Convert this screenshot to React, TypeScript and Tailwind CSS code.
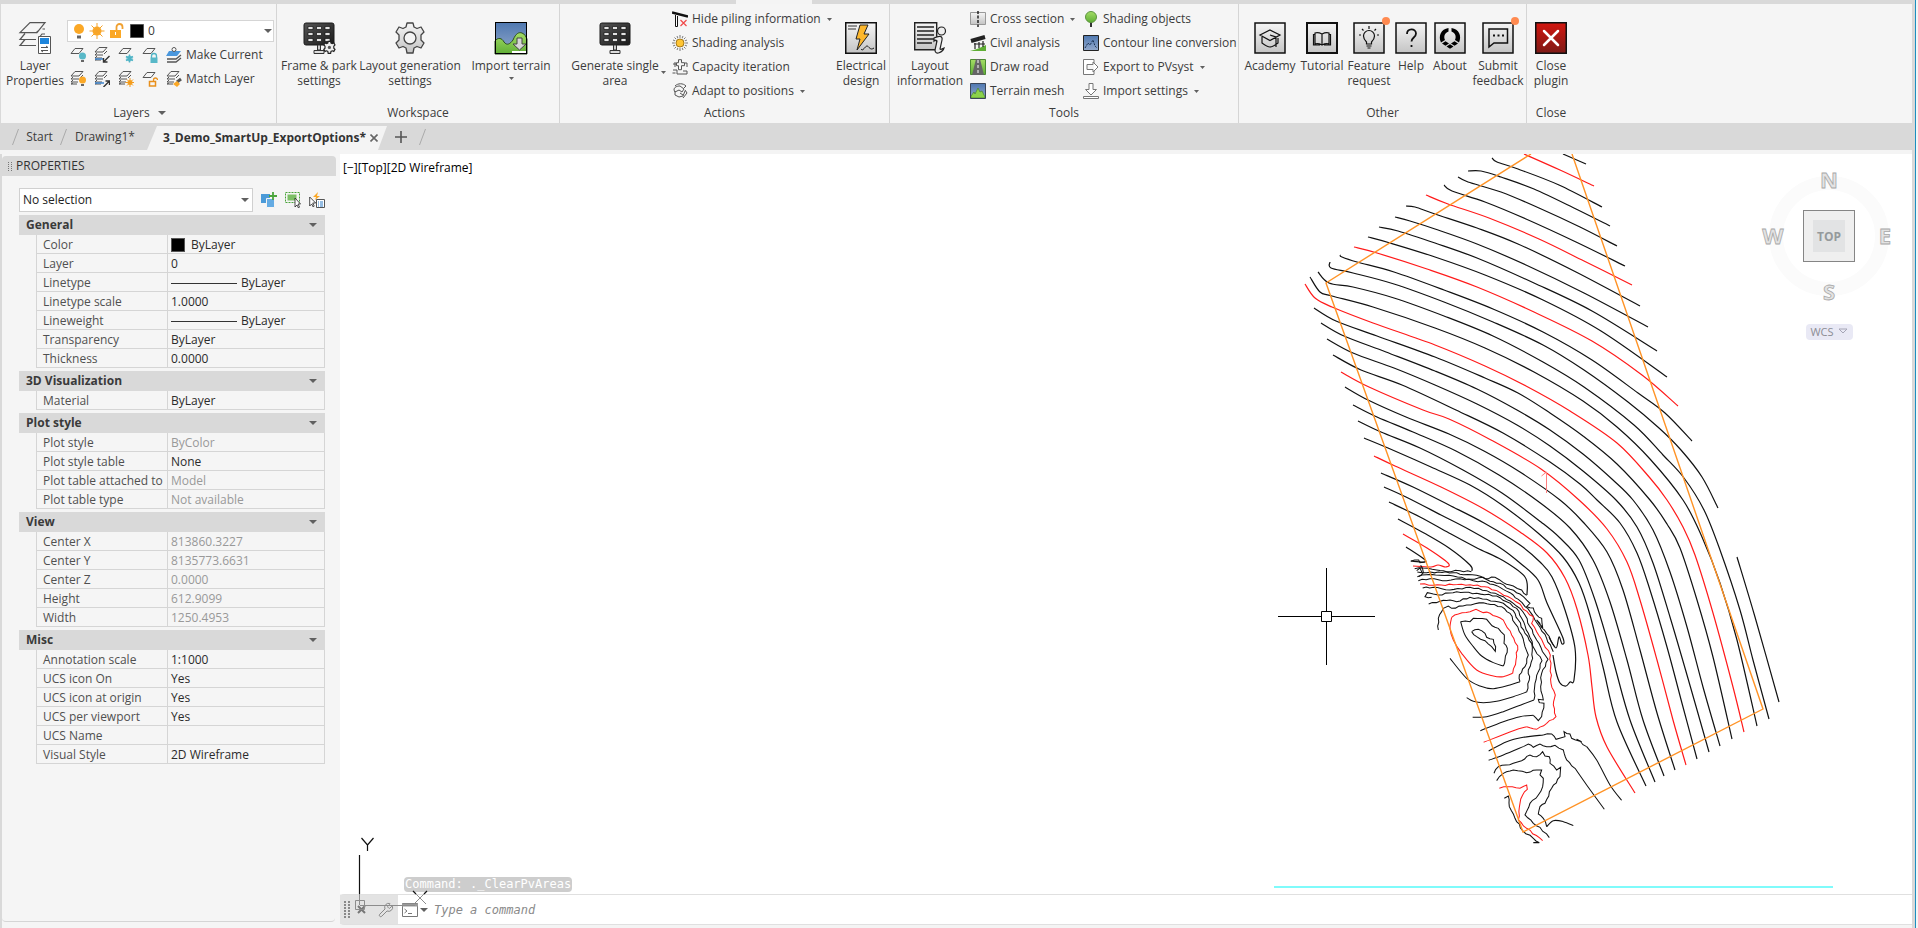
import type { ReactNode } from "react";
import { Wrench } from "lucide-react";

type Point = [number, number];

const RED = "#ff1a1a";
const BLACK = "#111";

function parse(points: string): Point[] {
    return points.split(" ").map((pair) => pair.split(",").map(Number) as Point);
}

// Catmull-Rom spline through the given points
function smooth(points: string) {
    const p = parse(points);
    let d = `M${p[0][0]} ${p[0][1]}`;
    for (let i = 0; i < p.length - 1; i++) {
        const a = p[i - 1] ?? p[i];
        const b = p[i];
        const c = p[i + 1];
        const e = p[i + 2] ?? c;
        d += `C${b[0] + (c[0] - a[0]) / 6} ${b[1] + (c[1] - a[1]) / 6} ${c[0] - (e[0] - b[0]) / 6} ${c[1] - (e[1] - b[1]) / 6} ${c[0]} ${c[1]}`;
    }
    return d;
}

function rough(points: string) {
    const p = parse(points);
    let d = `M${p[0][0]} ${p[0][1]}`;
    for (let i = 1; i < p.length; i++) {
        const [x0, y0] = p[i - 1];
        const [x1, y1] = p[i];
        const len = Math.hypot(x1 - x0, y1 - y0);
        const n = Math.max(1, Math.round(len / 12));
        for (let k = 1; k <= n; k++) {
            const t = k / n;
            const off = k === n ? 0 : Math.sin(i * 7 + k * 4) * 2;
            d += `L${x0 + (x1 - x0) * t - ((y1 - y0) / len) * off} ${y0 + (y1 - y0) * t + ((x1 - x0) / len) * off}`;
        }
    }
    return d;
}

const minorContours = [
    "1563,154 1586,164",
    "1492,158 1497,162 1518,169 1559,185 1602,207",
    "1468,171 1481,171 1501,177 1534,189 1576,209 1610,226",
    "1458,177 1468,182 1501,192 1539,208 1580,227 1617,246",
    "1444,185 1452,191 1485,202 1526,219 1576,242 1625,266",
    "1406,206 1415,207 1435,214 1477,228 1518,244 1576,272 1640,306",
    "1395,217 1410,221 1435,229 1477,244 1526,265 1584,293 1648,327",
    "1379,227 1398,231 1435,243 1477,258 1534,283 1592,311 1657,351",
    "1368,237 1390,243 1435,257 1485,275 1543,300 1601,331 1667,377",
    "1340,255 1342,257 1357,262 1394,272 1444,290 1493,309 1543,332 1592,360 1638,393 1665,413 1692,441",
    "1330,262 1331,268 1353,273 1394,284 1444,302 1493,322 1543,345 1584,370 1628,402 1659,428 1681,450 1702,477 1718,508",
    "1318,272 1329,283 1353,287 1394,298 1444,316 1493,336 1543,362 1584,387 1634,425 1663,455 1684,478 1704,510 1720,550 1740,610 1753,660 1769,719",
    "1310,277 1320,292 1332,296 1373,307 1435,328 1485,348 1534,372 1583,401 1617,427 1650,459 1683,500 1702,537 1720,583 1737,640 1757,726",
    "1314,308 1336,321 1377,336 1435,357 1485,378 1518,393 1550,413 1583,436 1617,464 1650,500 1667,524 1680,548 1697,600 1713,657 1732,739",
    "1321,323 1344,336 1386,352 1435,371 1477,389 1517,410 1550,430 1583,454 1613,480 1633,500 1653,530 1670,572 1687,627 1703,687 1720,746",
    "1327,339 1353,353 1394,368 1435,385 1477,404 1517,425 1550,446 1583,471 1616,500 1637,527 1653,563 1670,617 1687,675 1709,752",
    "1333,355 1361,370 1402,385 1456,410 1503,433 1550,462 1580,484 1597,500 1620,523 1637,553 1650,590 1667,647 1683,707 1697,759",
    "1345,387 1368,400 1406,417 1449,434 1484,451 1520,472 1560,500 1583,522 1607,552 1623,590 1640,650 1657,713 1675,770",
    "1353,405 1377,417 1413,432 1456,451 1499,475 1539,502 1570,528 1593,560 1610,602 1627,660 1643,720 1664,776",
    "1358,421 1381,432 1420,448 1463,470 1502,493 1541,522 1560,538 1579,560 1595,600 1613,660 1630,720 1655,782",
    "1364,438 1388,448 1431,467 1470,485 1502,505 1538,533 1563,557 1579,583 1590,615 1603,667 1617,722 1646,786",
    "1381,473 1413,487 1449,505 1484,523 1520,545 1540,562 1552,577 1565,610 1575,648 1574,680 1570,682 1566,686 1560,683 1556,672 1553,655",
    "1384,487 1406,497 1441,515 1470,530 1499,547 1520,563 1538,580 1547,603 1563,638 1562,644 1559,637 1556,648 1549,637",
    "1389,502 1420,517 1449,533 1477,548 1502,560 1525,577 1527,595",
    "1398,519 1424,533 1449,548 1470,565 1472,571",
    "1406,547 1424,559 1424,562 1411,561",
    "1737,557 1755,617 1779,702",
];

const majorContours = [
    "1524,154 1560,170 1594,186",
    "1426,195 1448,204 1489,218 1539,239 1584,261 1632,285",
    "1354,247 1377,253 1427,269 1477,287 1534,312 1592,341 1642,375 1678,406",
    "1305,284 1315,298 1332,307 1373,323 1435,345 1485,366 1526,386 1570,411 1617,443 1650,478 1667,500 1683,527 1695,555 1713,613 1733,687 1744,732",
    "1341,372 1369,387 1423,410 1449,419 1491,440 1541,469 1579,500 1607,529 1627,562 1640,600 1657,660 1673,720 1686,765",
    "1374,456 1395,466 1441,487 1484,509 1520,532 1547,553 1565,578 1577,609 1588,655 1592,687 1596,717 1607,747 1635,793",
    "1403,534 1427,548 1448,563 1446,567 1438,565 1431,567 1413,566",
];

const roughMinor = [
    "122,64 146,60 150,68 165,66",
    "134,86 160,84 200,90 230,95 270,92 304,95",
    "470,166 455,150 430,138 400,128 375,112 345,116 320,106 280,104 250,98 205,96 170,98 142,96",
    "142,110 170,104 210,106 250,108 275,112 300,118 340,112 360,124 390,130 420,148 450,162 480,190 470,200 490,204 500,225 515,235 518,262 500,240 530,280 555,322",
    "145,122 180,116 230,122 270,116 310,122 350,126 390,142 420,158 445,178 465,200 480,215 495,240 510,262 530,295 550,335",
    "158,144 190,142 240,150 300,142 350,152 400,170 430,190 450,205 465,225 480,260 500,300 525,345 534,358 515,400 512,440 520,480 505,478 508,488 522,490 515,530 505,542 490,526",
    "185,172 165,170 172,158 190,162 205,165 260,155 320,160 380,168 410,185 440,205 455,235 475,280 495,330 516,362 505,395 495,430 492,480",
    "176,192 210,184 240,180 260,185 300,172 350,178 400,190 430,212 445,240 465,280 485,310 488,355 475,390 478,420 470,456",
    "205,270 205,235 220,205 235,198 245,205 290,195 340,188 395,200 420,220 435,250 455,285 465,320 475,345 465,380 448,405 450,425",
    "272,245 300,245 310,235 350,238 360,250 375,262 385,265 403,285 402,310 412,325 405,360 400,378",
    "305,275 325,268 345,280 350,292 370,298 377,320 376,334 365,320 345,302 320,290 305,275",
    "520,585 545,582 558,598 585,590 582,575 600,582 605,595 635,605 620,598 650,620",
    "460,620 475,612 490,622 510,612 530,620 555,616 580,630 590,660 615,685",
    "372,700 385,680 430,670 455,662 480,645 500,650 518,635 525,648 538,650 540,670 560,690 572,682 570,710 545,745 525,790 510,800 505,822 520,835 530,860",
    "380,722 400,700 430,690 470,698 500,690 515,690 510,705 520,715 518,740 505,765 480,790 465,825 490,850 510,862 538,893",
    "403,775 415,768 418,800 435,835 458,872 490,895 508,908 490,908",
    "140,92 150,84 156,98",
    "152,76 160,98 146,110",
];

const smoothMinor = [
    "490,526 450,530 400,545 331,572",
    "492,480 460,492 400,515 350,530 308,532",
    "470,456 430,470 380,484 340,488 310,484 290,473",
    "450,425 420,435 370,446 330,438 290,415 240,355",
    "400,378 370,368 335,348 310,320 285,285 272,245",
    "356,633 410,605 460,592 520,585",
    "650,620 680,660 720,735 755,781",
    "356,661 400,645 460,620",
    "615,685 650,735 703,808",
    "530,860 550,842 580,845 610,857",
];

const roughMajor = [
    "150,132 190,136 250,134 300,134 355,142 390,158 425,176 450,192 460,208 490,230 485,250 500,275 520,310 541,345 543,430 556,465 550,495 558,530 530,550 500,568 470,560",
    "245,232 265,222 300,215 318,208 330,214 360,220 400,240 425,285 443,318 438,360 428,400",
    "388,745 415,740 450,745 470,735 472,748 458,765 450,790 445,840 470,865 518,902",
];

const smoothMajor = ["470,560 430,572 341,607", "428,400 400,410 370,408 320,390 275,340 250,300 240,265 245,232"];

function TerrainDrawing() {
    return (
        <svg className="absolute inset-0 h-full w-full" viewBox="340 154 1572 740" preserveAspectRatio="xMaxYMin meet" fill="none">
            <g stroke={BLACK} strokeWidth="1.2">
                {minorContours.map((line) => <path key={line} d={smooth(line)} />)}
            </g>
            <g stroke={RED} strokeWidth="1.2">
                {majorContours.map((line) => <path key={line} d={smooth(line)} />)}
            </g>
            <g transform="translate(1370 540) scale(0.3333)" strokeWidth="3.1">
                <g stroke={BLACK}>
                    {roughMinor.map((line) => <path key={line} d={rough(line)} />)}
                    {smoothMinor.map((line) => <path key={line} d={smooth(line)} />)}
                </g>
                <g stroke={RED}>
                    {roughMajor.map((line) => <path key={line} d={rough(line)} />)}
                    {smoothMajor.map((line) => <path key={line} d={smooth(line)} />)}
                </g>
            </g>
            <path d="M1531 154L1326 283L1523 832L1763 709L1572 154" stroke="#ff9326" strokeWidth="1.4" />
            <path d="M1546.500 493V472l-5 4" stroke="#ff7f7f" />
            <path d="M1274 887H1833" stroke="#7ffbfb" strokeWidth="2" />
            {/* Crosshair cursor */}
            <path d="M1278 616.500H1321M1332 616.500H1375M1326.500 568V611M1326.500 622V665M1321.500 611.500h10v10h-10z" stroke="#000" />
        </svg>
    );
}

function ViewCube() {
    return (
        <svg className="absolute top-2 right-3 h-[180px] w-36" viewBox="0 0 144 180" aria-label="View cube" fontFamily="'Open Sans', sans-serif" textAnchor="middle">
            <circle cx="73" cy="74" r="53" fill="none" stroke="#fbfbfb" strokeWidth="14" />
            <g fill="#e3e3e3" stroke="#a8a8a8" strokeWidth="0.8" fontSize="22" fontWeight="700">
                <text x="73" y="26">N</text>
                <text x="73" y="138">S</text>
                <text x="17" y="82">W</text>
                <text x="129" y="82">E</text>
            </g>
            <rect x="47.500" y="48.500" width="51" height="51" fill="#efefef" stroke="#858585" />
            <rect x="57" y="58" width="32" height="32" fill="#e2e3e4" />
            <text x="73" y="79" fontSize="12" fontWeight="700" fill="#959a9c">TOP</text>
            <rect x="50" y="162" width="47" height="16" rx="4" fill="#e9e9f5" />
            <text x="66" y="174" fontSize="11" fill="#8c8c94">WCS</text>
            <path d="M83 167h8l-4 4z" fill="none" stroke="#a5a5b5" />
        </svg>
    );
}

function Caret({ small = false }: { small?: boolean }) {
    return (
        <svg className={small ? "h-[3px] w-[5px] shrink-0" : "h-1 w-2 shrink-0"} viewBox="0 0 8 4" preserveAspectRatio="none" aria-hidden="true">
            <path d="M0 0h8L4 4z" fill="#606060" />
        </svg>
    );
}

function Icon16({ children }: { children: ReactNode }) {
    return <svg className="h-4 w-4 shrink-0" viewBox="0 0 16 16" fill="none" aria-hidden="true">{children}</svg>;
}

function Icon32({ children }: { children: ReactNode }) {
    return <svg className="h-8 w-8 shrink-0 overflow-visible" viewBox="0 0 32 32" fill="none" aria-hidden="true">{children}</svg>;
}

function Gradients() {
    return (
        <svg className="absolute h-0 w-0" aria-hidden="true">
            <defs>
                <linearGradient id="metal" x1="0" y1="0" x2="0" y2="1"><stop offset="0" stopColor="#f5f5f5" /><stop offset="1" stopColor="#c4c4c4" /></linearGradient>
                <linearGradient id="sky" x1="0" y1="0" x2="0" y2="1"><stop offset="0" stopColor="#4f78b0" /><stop offset="1" stopColor="#93a9cc" /></linearGradient>
                <linearGradient id="grass" x1="0" y1="0" x2="0" y2="1"><stop offset="0" stopColor="#a4dd66" /><stop offset="1" stopColor="#5fae35" /></linearGradient>
                <linearGradient id="danger" x1="0" y1="0" x2="0" y2="1"><stop offset="0" stopColor="#d3160f" /><stop offset="1" stopColor="#7d1a16" /></linearGradient>
                <linearGradient id="panel" x1="0" y1="0" x2="1" y2="1"><stop offset="0" stopColor="#555" /><stop offset="1" stopColor="#1b1b1b" /></linearGradient>
            </defs>
        </svg>
    );
}

function SolarPanel() {
    return (
        <>
            <rect x="1" y="1" width="30" height="22" rx="2" fill="url(#panel)" stroke="#1a1a1a" />
            <path d="M5 4.500h5v3H5zM13.500 4.500h5v3h-5zM22 4.500h5v3h-5zM5 10.500h5v3H5zM13.500 10.500h5v3h-5zM22 10.500h5v3h-5zM5 16.500h5v3H5zM13.500 16.500h5v3h-5zM22 16.500h5v3h-5z" fill="#e2e2e2" stroke="#111" strokeWidth="0.7" />
            <path d="M14.500 23h3v5h-3z" fill="#ccc" stroke="#333" />
            <path d="M11 28.500h10v3H11z" fill="#ddd" stroke="#333" />
        </>
    );
}

const GEAR = "M13 1h6l1 4 3 1.500 4-1.500 3 5-3 3v5l3 3-3 5-4-1.500L20 26l-1 5h-6l-1-5-3-1.500L5 26l-3-5 3-3v-5l-3-3 3-5 4 1.500L12 5z";

const icons = {
    layerProperties: (
        <Icon32>
            <path d="M11 .700h15l-8 10H1zM6 11.500l-5 6h16M6 17.500l-5 6h16M17 11l2-2M26 7h-2.500M26 12h-3l-2 2.500" stroke="#555" strokeWidth="1.200" />
            <path d="M19.500 14.500h12v17h-12z" fill="#fff" stroke="#555" />
            <path d="M21 16h9v6h-9z" fill="#1f86dc" />
            <path d="M22 25.500h7l-2-1.500M29 28.500h-7l2 1.500" stroke="#555" />
        </Icon32>
    ),
    framePark: (
        <Icon32>
            <SolarPanel />
            <g transform="translate(20 19) scale(0.4)"><path d={GEAR} fill="#eee" stroke="#222" strokeWidth="3" /><circle cx="16" cy="16" r="4" fill="#555" /></g>
        </Icon32>
    ),
    gear: (
        <Icon32>
            <path d={GEAR} fill="url(#metal)" stroke="#444" strokeWidth="1.300" strokeLinejoin="round" />
            <circle cx="16" cy="16" r="6" fill="#f4f4f4" stroke="#444" strokeWidth="1.300" />
        </Icon32>
    ),
    importTerrain: (
        <Icon32>
            <rect x=".5" y=".5" width="31" height="31" fill="url(#sky)" />
            <path d="M0 32V19c3-4 7-3 9 1 3 4 6 2 9-2 3-7 6-8 9-7 3 1 4 4 5 6v15z" fill="url(#grass)" stroke="#2c4f1c" />
            <path d="M22 16h5v6h4l-6.500 6L18 22h4z" fill="#d6d6d6" stroke="#444" />
            <path d="M17 30h15" stroke="#fff" strokeWidth="2" />
            <rect x=".5" y=".5" width="31" height="31" stroke="#000" />
        </Icon32>
    ),
    generate: <Icon32><SolarPanel /></Icon32>,
    electrical: (
        <Icon32>
            <rect x=".75" y=".75" width="30.500" height="30.500" fill="url(#metal)" stroke="#111" strokeWidth="1.500" />
            <path d="M3 4h9M3 7h8" stroke="#333" />
            <path d="M15 3h8l-4 9h5L12 28l3-11h-4z" fill="#fdb72c" stroke="#222" />
            <path d="M16 27c2 3 4-3 6-3s3 5 7 2" stroke="#111" />
        </Icon32>
    ),
    information: (
        <Icon32>
            <path d="M.7.7h22v27H.7z" fill="url(#metal)" stroke="#222" strokeWidth="1.400" />
            <path d="M3 5h17M3 9h17M3 13h17M3 17h17M3 21h15" stroke="#222" strokeWidth="1.500" />
            <circle cx="27.500" cy="9" r="4" fill="#eee" stroke="#222" strokeWidth="1.200" />
            <path d="M20 16c4-2 9-3 8 2l-2 9c1 1 2 0 4-1-1 4-9 8-9 2l2-9c-1-1-2-1-3 0z" fill="#eee" stroke="#222" strokeWidth="1.200" />
        </Icon32>
    ),
    academy: (
        <Framed>
            <path d="M16 8l10 5-10 5.500L6 13zM8 15v6c4 3 6 4 8 4s4-1 8-4v-5M16 13l6 2v8M22 23v2" />
        </Framed>
    ),
    tutorial: (
        <Framed heavy>
            <path d="M9 11c3-1 5 0 7 1 2-1 4-2 7-1v11c-3-1-5 0-7 1-2-1-4-2-7-1zM16 12v11M9 12.500H7.500V23H14M23 12.500h1.500V23H18" />
        </Framed>
    ),
    feature: (
        <Framed dot>
            <path d="M13.500 22v-2c-2-2-3-4-3-6a5.500 5.500 0 0 1 11 0c0 2-1 4-3 6v2zM13.500 24h5M14.500 26h3M16 4v3M9 7l1.500 1.500M23 7l-1.500 1.500M6 13h2M24 13h2" />
        </Framed>
    ),
    help: (
        <Framed>
            <path d="M12 12c0-6 9-6 9-.5 0 4-4.500 4-4.500 8M16.500 23v2" strokeWidth="1.800" />
        </Framed>
    ),
    about: (
        <Framed>
            <g fill="#000" stroke="none">
                <path d="M14.500 6C7 7 4 14 7 20.500l4-2.500c-1.500-3.500-.5-7 3.500-8.500zM17.500 6C25 7 28 14 25 20.500L21 18c1.500-3.500.5-7-3.500-8.500z" />
                <path d="M8 21.500l3.500-2.200 3.500 2.200-3.500 2.200zM17 21.500l3.500-2.200 3.500 2.200-3.500 2.200zM12.500 24.500l3.500-2.200 3.500 2.200-3.500 2.200z" />
            </g>
        </Framed>
    ),
    feedback: (
        <Framed dot>
            <path d="M7 7h18.500v14H12l-5 4z" strokeWidth="1.500" />
            <path d="M11 13.500h2M15.500 13.500h2M20 13.500h2" strokeWidth="2" />
        </Framed>
    ),
    close: (
        <Icon32>
            <rect x=".75" y=".75" width="30.500" height="30.500" fill="url(#danger)" stroke="#111" strokeWidth="1.500" />
            <path d="M9 9l14 14M23 9L9 23" stroke="#fff" strokeWidth="2.500" strokeLinecap="round" />
        </Icon32>
    ),
};

function Framed({ children, heavy = false, dot = false }: { children: ReactNode; heavy?: boolean; dot?: boolean }) {
    return (
        <Icon32>
            <rect x="1" y="1" width="30" height="30" fill="url(#metal)" stroke="#111" strokeWidth={heavy ? 2 : 1.5} />
            <g stroke="#111" strokeWidth="1.200">{children}</g>
            {dot && <circle cx="33" cy="-1" r="4" fill="#ff8a50" />}
        </Icon32>
    );
}

const smallIcons = {
    piling: (
        <Icon16>
            <path d="M0 1.500l16 4" stroke="#111" strokeWidth="2.500" />
            <path d="M3.500 4v11.500h2V5" stroke="#111" fill="#fff" />
            <path d="M8.500 9l6 6M14.500 9l-6 6" stroke="#f04848" strokeWidth="1.200" />
        </Icon16>
    ),
    shading: (
        <Icon16>
            <path d="M8 0v16M0 8h16M2.500 2.500l11 11M13.500 2.500l-11 11M5 1l6 14M11 1L5 15M1 5l14 6M1 11l14-6" stroke="#444" strokeWidth=".7" />
            <circle cx="8" cy="8" r="5.300" fill="#f4f4f4" />
            <circle cx="8" cy="8" r="4" fill="#ffc533" stroke="#a67b1c" />
        </Icon16>
    ),
    capacity: (
        <Icon16>
            <path d="M1 5h4M3 3v5M6.500.7h3v3h3v3h-3v4h-3v-4h-2v-3h2zM1 11h4v4h10v-3h-4M13 4h2v4M.5 14h3" stroke="#555" />
        </Icon16>
    ),
    adapt: (
        <Icon16>
            <path d="M3 3c3-3 8-3 11 0l-2 2M2 7c0-3 3-4 6-4l4 3-2 3-3-2-4 2zM3 8v4l4 2 4-1 2-5M8 10l3 2M13 7l2 3-4 5" stroke="#555" />
        </Icon16>
    ),
    crossSection: (
        <Icon16>
            <path d="M.5 1.500h15v12H.5z" fill="url(#metal)" stroke="#999" />
            <path d="M8 0v16" stroke="#222" strokeWidth="1.500" strokeDasharray="3 1.500" />
        </Icon16>
    ),
    civil: (
        <Icon16>
            <path d="M0 16c5-1 10-3 16-6v6z" fill="#5fae35" />
            <path d="M1 6l14-4" stroke="#222" strokeWidth="4" />
            <path d="M5 8v6M9 7v6M13 6v6M4 9h11" stroke="#222" strokeWidth="1.200" />
        </Icon16>
    ),
    road: (
        <Icon16>
            <path d="M.5.500h15v15H.5z" fill="url(#grass)" stroke="#4c8a32" />
            <path d="M6 0h4l4 16H2z" fill="#666" />
            <path d="M8 1v14" stroke="#fff" strokeDasharray="3 2" />
        </Icon16>
    ),
    mesh: (
        <Icon16>
            <path d="M.5.500h15v15H.5z" fill="url(#sky)" />
            <path d="M1 13l3-4 1 2 3-6 2 4 2-1 3 6v1H1z" fill="#8bd24a" stroke="#47822c" strokeWidth=".7" />
            <path d="M.5.500h15v15H.5z" stroke="#3b4658" />
        </Icon16>
    ),
    tree: (
        <Icon16>
            <path d="M8 9v7" stroke="#333" strokeWidth="2" />
            <circle cx="8" cy="6" r="5.500" fill="url(#grass)" stroke="#5d9440" />
        </Icon16>
    ),
    contour: (
        <Icon16>
            <path d="M.5.500h15v15H.5z" fill="url(#sky)" stroke="#222" />
            <path d="M2 13l3-5 2 2 3-5 2 6 2 2" stroke="#1c3354" strokeDasharray="2 1" />
        </Icon16>
    ),
    exportIcon: (
        <Icon16>
            <path d="M11 4V.500H.500v15H11V12M4 5.500h6V3l5 5-5 5v-2.500H4z" fill="#fff" stroke="#777" />
        </Icon16>
    ),
    importIcon: (
        <Icon16>
            <path d="M6 .500h4v6h3.500L8 12 2.500 6.500H6zM.500 13.500h15v2H.500z" fill="#fff" stroke="#777" />
        </Icon16>
    ),
};

type Badge = "bulbBlue" | "bulb" | "in" | "out" | "snow" | "sun" | "lockBlue" | "unlock";

const badges: Record<Badge, ReactNode> = {
    bulbBlue: <><circle cx="12.500" cy="9" r="3.500" fill="#58b8c8" /><path d="M11 14h3" stroke="#666" strokeWidth="2" /></>,
    bulb: <><circle cx="12.500" cy="9" r="3.500" fill="#fba826" /><path d="M11 14h3" stroke="#666" strokeWidth="2" /></>,
    in: <><path d="M1 12h9" stroke="#3f86cf" strokeWidth="1.500" /><path d="M15.500 9l-6 6M9.500 11v4h4" stroke="#333" strokeWidth="1.400" /></>,
    out: <><path d="M1 12h9" stroke="#3f86cf" strokeWidth="1.500" /><path d="M9.500 16l6-6M11.500 10h4v4" stroke="#333" strokeWidth="1.400" /></>,
    snow: <><path d="M11.500 7.500v8M8 9.500l7 4M15 9.500l-7 4" stroke="#4fb4c6" strokeWidth="1.500" /><circle cx="11.500" cy="11.500" r="2.500" stroke="#4fb4c6" /></>,
    sun: <><circle cx="12" cy="11.500" r="2.500" fill="#fba826" /><path d="M12 7v9M7.500 11.500h9M9 8.500l6 6M15 8.500l-6 6" stroke="#f29a1c" /></>,
    lockBlue: <><path d="M9.500 11V9a2.500 2.500 0 0 1 5 0v2" stroke="#4fb4c6" strokeWidth="1.300" /><path d="M8.500 10.500h7V16h-7z" fill="#58b8c8" /></>,
    unlock: <><path d="M11.500 11V9a2 2 0 0 1 4 0" stroke="#e8901c" strokeWidth="1.300" /><path d="M7.500 10.500h6V15h-6z" stroke="#e8901c" strokeWidth="1.500" /></>,
};

function LayerIcon({ badge, stacked = false }: { badge: Badge; stacked?: boolean }) {
    return (
        <Icon16>
            {stacked
                ? <path d="M5 .500h8L9 5H1zM3 6L1 8h8M3 9l-2 2h7M13 4l-3 3M3 12l-2 1h6" stroke="#555" />
                : <path d="M5 1.500h8l-4 5H1z" stroke="#555" />}
            {badges[badge]}
        </Icon16>
    );
}

function BigButton({ icon, label, width, caret }: { icon: ReactNode; label: string; width: string; caret?: "below" | "side" }) {
    return (
        <button type="button" className={`relative flex shrink-0 flex-col items-center pt-[18px] ${width}`}>
            {icon}
            <span className="mt-1 text-center leading-[15px] whitespace-pre-line">{label}</span>
            {caret === "below" && <span className="mt-1"><Caret small /></span>}
            {caret === "side" && <span className="absolute top-[67px] right-0"><Caret small /></span>}
        </button>
    );
}

function SmallButton({ icon, label, caret = false }: { icon: ReactNode; label: string; caret?: boolean }) {
    return (
        <button type="button" className="flex h-6 items-center whitespace-nowrap">
            {icon}
            <span className="ml-1">{label}</span>
            {caret && <span className="ml-[6px]"><Caret small /></span>}
        </button>
    );
}

function RibbonPanel({ title, children, caret = false, last = false }: { title: string; children: ReactNode; caret?: boolean; last?: boolean }) {
    return (
        <section className={last ? "flex flex-col" : "flex flex-col border-r border-[#d5d5d5]"}>
            <div className="flex h-[100px]">{children}</div>
            <h2 className="flex items-center justify-center gap-2 leading-[18px]">
                {title}
                {caret && <Caret />}
            </h2>
        </section>
    );
}

function Ribbon() {
    return (
        <div className="flex h-[119px] border-l border-[#d9d9d9] bg-[#f5f5f5] pl-[2px]">
            <RibbonPanel title="Layers" caret>
                <BigButton icon={icons.layerProperties} label={"Layer\nProperties"} width="w-[64px]" />
                <div className="w-[209px] pt-4 pr-[2px]">
                    <div className="relative flex items-center">
                        <select aria-label="Layer" className="h-[22px] w-full appearance-none border border-[#d5d5d5] bg-white pl-20 text-xs">
                            <option>0</option>
                        </select>
                        <svg className="pointer-events-none absolute left-[6px] h-4 w-[72px]" viewBox="0 0 72 16" fill="none" aria-hidden="true">
                            <circle cx="6" cy="6" r="5" fill="#fba826" />
                            <path d="M4 14h4" stroke="#666" strokeWidth="3" />
                            <circle cx="24" cy="8" r="4.500" fill="#fba826" />
                            <path d="M24 0v16M16.500 8h15M18.500 2.500l11 11M29.500 2.500l-11 11" stroke="#f5a32a" />
                            <path d="M43.500 7V4a3 3 0 0 1 6 0v2" stroke="#f0a030" strokeWidth="1.800" />
                            <path d="M37 7h11v8H37z" fill="#fba826" />
                            <path d="M42.500 9v3" stroke="#fff" />
                            <path d="M57.500 1.500h13v13h-13z" fill="#000" stroke="#555" />
                        </svg>
                        <span className="pointer-events-none absolute right-[2px]"><Caret /></span>
                    </div>
                    <div className="flex h-6 items-center gap-2 pt-[2px] pl-[3px]">
                        <button type="button" aria-label="Layer off"><LayerIcon badge="bulbBlue" /></button>
                        <button type="button" aria-label="Isolate"><LayerIcon badge="in" stacked /></button>
                        <button type="button" aria-label="Freeze"><LayerIcon badge="snow" /></button>
                        <button type="button" aria-label="Lock"><LayerIcon badge="lockBlue" /></button>
                        <button type="button" className="flex items-center gap-1 whitespace-nowrap">
                            <Icon16>
                                <path d="M3 4h12l-4 5H0z" fill="#4a97dd" />
                                <circle cx="8" cy="2.500" r="2" fill="#fff" stroke="#555" />
                                <path d="M1 12h9l5-4M1 15h9l5-4" stroke="#555" strokeWidth="1.300" />
                            </Icon16>
                            Make Current
                        </button>
                    </div>
                    <div className="flex h-6 items-center gap-2 pt-[2px] pl-[3px]">
                        <button type="button" aria-label="Layers on"><LayerIcon badge="bulb" stacked /></button>
                        <button type="button" aria-label="Unisolate"><LayerIcon badge="out" stacked /></button>
                        <button type="button" aria-label="Thaw"><LayerIcon badge="sun" stacked /></button>
                        <button type="button" aria-label="Unlock"><LayerIcon badge="unlock" /></button>
                        <button type="button" className="flex items-center gap-1 whitespace-nowrap">
                            <Icon16>
                                <path d="M5 .500h8L9 5H1zM3 6L1 8h8M3 9l-2 2h7M13 4l-3 3M3 12l-2 1h6" stroke="#555" />
                                <path d="M15 8l-4 3" stroke="#555" strokeWidth="3" />
                                <path d="M11 10l3 3-3 3-4-3z" fill="#fba826" />
                            </Icon16>
                            Match Layer
                        </button>
                    </div>
                </div>
            </RibbonPanel>
            <RibbonPanel title="Workspace">
                <BigButton icon={icons.framePark} label={"Frame & park\nsettings"} width="ml-1 w-[76px]" />
                <BigButton icon={icons.gear} label={"Layout generation\nsettings"} width="w-[106px]" />
                <BigButton icon={icons.importTerrain} label="Import terrain" width="w-[96px]" caret="below" />
            </RibbonPanel>
            <RibbonPanel title="Actions">
                <BigButton icon={icons.generate} label={"Generate single\narea"} width="ml-1 w-[102px]" caret="side" />
                <div className="ml-[6px] w-[161px] pt-[3px]">
                    <SmallButton icon={smallIcons.piling} label="Hide piling information" caret />
                    <SmallButton icon={smallIcons.shading} label="Shading analysis" />
                    <SmallButton icon={smallIcons.capacity} label="Capacity iteration" />
                    <SmallButton icon={smallIcons.adapt} label="Adapt to positions" caret />
                </div>
                <BigButton icon={icons.electrical} label={"Electrical\ndesign"} width="w-14" />
            </RibbonPanel>
            <RibbonPanel title="Tools">
                <BigButton icon={icons.information} label={"Layout\ninformation"} width="w-20" />
                <div className="w-[113px] pt-[3px]">
                    <SmallButton icon={smallIcons.crossSection} label="Cross section" caret />
                    <SmallButton icon={smallIcons.civil} label="Civil analysis" />
                    <SmallButton icon={smallIcons.road} label="Draw road" />
                    <SmallButton icon={smallIcons.mesh} label="Terrain mesh" />
                </div>
                <div className="w-[155px] pt-[3px]">
                    <SmallButton icon={smallIcons.tree} label="Shading objects" />
                    <SmallButton icon={smallIcons.contour} label="Contour line conversion" />
                    <SmallButton icon={smallIcons.exportIcon} label="Export to PVsyst" caret />
                    <SmallButton icon={smallIcons.importIcon} label="Import settings" caret />
                </div>
            </RibbonPanel>
            <RibbonPanel title="Other">
                <BigButton icon={icons.academy} label="Academy" width="ml-[3px] w-14" />
                <BigButton icon={icons.tutorial} label="Tutorial" width="w-12" />
                <BigButton icon={icons.feature} label={"Feature\nrequest"} width="w-[46px]" />
                <BigButton icon={icons.help} label="Help" width="w-[38px]" />
                <BigButton icon={icons.about} label="About" width="w-10" />
                <BigButton icon={icons.feedback} label={"Submit\nfeedback"} width="w-14" />
            </RibbonPanel>
            <RibbonPanel title="Close" last>
                <BigButton icon={icons.close} label={"Close\nplugin"} width="w-12" />
            </RibbonPanel>
        </div>
    );
}

function Slash() {
    return (
        <svg className="h-4 w-[7px] shrink-0" viewBox="0 0 7 16" aria-hidden="true">
            <path d="M6.500 0L.500 16" stroke="#aaa" />
        </svg>
    );
}

function FileTabs() {
    return (
        <nav className="flex h-[27px] items-center bg-[#d9d9d9] pl-3">
            <Slash />
            <button type="button" className="w-[41px] text-center">Start</button>
            <Slash />
            <button type="button" className="w-20 pl-2 text-left">Drawing1*</button>
            <div className="flex h-6 w-[240px] items-center gap-1 self-end bg-[#f4f4f4] pl-4 [clip-path:polygon(10px_0,100%_0,231px_100%,0_100%)]">
                <button type="button" className="font-bold whitespace-nowrap text-[#333]">3_Demo_SmartUp_ExportOptions*</button>
                <button type="button" aria-label="Close tab">
                    <svg className="h-2 w-2" viewBox="0 0 8 8"><path d="M.500.500l7 7M7.500.500l-7 7" stroke="#666" strokeWidth="1.600" /></svg>
                </button>
            </div>
            <button type="button" aria-label="New drawing" className="mr-3 ml-2">
                <svg className="h-3 w-3" viewBox="0 0 12 12"><path d="M6 0v12M0 6h12" stroke="#555" strokeWidth="1.600" /></svg>
            </button>
            <Slash />
        </nav>
    );
}

type Row = { name: string; value: string; muted?: boolean; swatch?: "color" | "line" };

const sections: { title: string; rows: Row[] }[] = [
    {
        title: "General",
        rows: [
            { name: "Color", value: "ByLayer", swatch: "color" },
            { name: "Layer", value: "0" },
            { name: "Linetype", value: "ByLayer", swatch: "line" },
            { name: "Linetype scale", value: "1.0000" },
            { name: "Lineweight", value: "ByLayer", swatch: "line" },
            { name: "Transparency", value: "ByLayer" },
            { name: "Thickness", value: "0.0000" },
        ],
    },
    { title: "3D Visualization", rows: [{ name: "Material", value: "ByLayer" }] },
    {
        title: "Plot style",
        rows: [
            { name: "Plot style", value: "ByColor", muted: true },
            { name: "Plot style table", value: "None" },
            { name: "Plot table attached to", value: "Model", muted: true },
            { name: "Plot table type", value: "Not available", muted: true },
        ],
    },
    {
        title: "View",
        rows: [
            { name: "Center X", value: "813860.3227", muted: true },
            { name: "Center Y", value: "8135773.6631", muted: true },
            { name: "Center Z", value: "0.0000", muted: true },
            { name: "Height", value: "612.9099", muted: true },
            { name: "Width", value: "1250.4953", muted: true },
        ],
    },
    {
        title: "Misc",
        rows: [
            { name: "Annotation scale", value: "1:1000" },
            { name: "UCS icon On", value: "Yes" },
            { name: "UCS icon at origin", value: "Yes" },
            { name: "UCS per viewport", value: "Yes" },
            { name: "UCS Name", value: "" },
            { name: "Visual Style", value: "2D Wireframe" },
        ],
    },
];

function PropertiesPalette() {
    return (
        <aside className="flex w-[340px] shrink-0 flex-col border-l-2 border-[#d9d9d9] bg-[#f5f5f5] pt-[2px]">
            <header className="mr-1 flex h-5 items-center gap-1 rounded-t bg-[#d9d9d9] pl-[6px]">
                <svg className="h-[9px] w-1" viewBox="0 0 4 9" aria-hidden="true">
                    <path d="M.500 0v9M3.500 0v9" stroke="#777" strokeDasharray="1 1" />
                </svg>
                <h2 className="leading-4 text-[#333]">PROPERTIES</h2>
            </header>
            <div className="mr-[5px] flex-1 rounded-b border-b border-[#d5d5d5] pr-[10px] pl-[17px]">
                <div className="flex items-center gap-2 pt-3 pb-[3px]">
                    <div className="relative flex w-[234px] items-center">
                        <select aria-label="Selection" className="h-6 w-full appearance-none border border-[#d0d0d0] bg-white pl-[3px] text-xs text-[#222]">
                            <option>No selection</option>
                        </select>
                        <span className="pointer-events-none absolute right-1"><Caret /></span>
                    </div>
                    <button type="button" aria-label="Toggle PICKADD">
                        <Icon16>
                            <path d="M0 2h9v9H0z" fill="#4b9ad8" />
                            <path d="M5.500 6.500h8v9h-8z" fill="#64abe3" stroke="#f4f4f4" />
                            <path d="M12 0v8M8 4h8" stroke="#4ba53c" strokeWidth="1.800" />
                        </Icon16>
                    </button>
                    <button type="button" aria-label="Select objects">
                        <Icon16>
                            <path d="M.500.500h14v10H.500z" stroke="#48a338" strokeDasharray="2 1" />
                            <path d="M2.500 2.500h9v6h-9z" fill="#7cbf66" />
                            <path d="M10 6v9l2-2 1.500 3 1-1-1.500-3h2.500z" fill="#fff" stroke="#222" strokeWidth=".8" />
                        </Icon16>
                    </button>
                    <button type="button" aria-label="Quick select">
                        <Icon16>
                            <path d="M.700 5v9l2-2 1.500 3 1-1-1.500-3h3z" fill="#fff" stroke="#222" strokeWidth=".8" />
                            <path d="M9 0L4 5h3l-1 3 5-4H8z" fill="#fba826" />
                            <path d="M7.500 7.500h8v8h-8z" fill="#fff" stroke="#555" />
                            <path d="M9 10h1M11 10h3M9 12h1M11 12h3M9 14h1M11 14h3" stroke="#2d7dc8" />
                        </Icon16>
                    </button>
                </div>
                {sections.map((section) => (
                    <section key={section.title} className="mb-[3px]">
                        <h3 className="flex h-5 items-center justify-between bg-[#d9d9d9] pr-2 pl-[7px] font-bold text-[#3a3a3a]">
                            {section.title}
                            <Caret />
                        </h3>
                        <div className="pl-[17px]">
                            <table className="w-full table-fixed border-separate border-spacing-0 border-l border-[#d5d5d5]">
                                <tbody>
                                    {section.rows.map((row) => (
                                        <tr key={row.name} className="h-[19px]">
                                            <th scope="row" className="w-[131px] border-r border-b border-[#d5d5d5] p-0 pt-[2px] pl-[6px] text-left leading-4 font-normal whitespace-nowrap text-[#505050]">
                                                {row.name}
                                            </th>
                                            <td className="border-r border-b border-[#d5d5d5] p-0 pt-[2px] pl-[3px] leading-4">
                                                <div className={row.muted ? "flex items-center text-[#999]" : "flex items-center text-[#2b2b2b]"}>
                                                    {row.swatch === "color" && <span className="mr-[6px] h-[14px] w-[14px] border border-[#555] bg-black" />}
                                                    {row.swatch === "line" && <span className="mr-1 h-px w-[66px] bg-[#333]" />}
                                                    {row.value}
                                                </div>
                                            </td>
                                        </tr>
                                    ))}
                                </tbody>
                            </table>
                        </div>
                    </section>
                ))}
            </div>
            <div className="h-[6px]" />
        </aside>
    );
}

function CommandLine() {
    return (
        <form className="flex h-[31px] rounded-l border-y border-[#e0e0e0] bg-white" onSubmit={(e) => e.preventDefault()}>
            <div className="flex w-[58px] shrink-0 items-center bg-[#e3e3e3] pl-1 text-[#888]">
                <svg className="h-[17px] w-[6px]" viewBox="0 0 6 17" aria-hidden="true">
                    <path d="M1 0v17M5 0v17" stroke="#888" strokeWidth="2" strokeDasharray="2 1" />
                </svg>
                <button type="button" aria-label="Close command line" className="ml-[7px]">
                    <svg className="h-[9px] w-[9px]" viewBox="0 0 9 9"><path d="M1 1l7 7M8 1L1 8" stroke="#777" strokeWidth="2" /></svg>
                </button>
                <button type="button" aria-label="Customize" className="ml-3">
                    <Wrench className="h-4 w-4" strokeWidth={1.5} />
                </button>
            </div>
            <button type="button" aria-label="Recent commands" className="ml-1 flex items-center gap-[2px]">
                <svg className="h-[14px] w-4" viewBox="0 0 16 14" fill="none" aria-hidden="true">
                    <path d="M.500.500h15v13H.500z" stroke="#777" />
                    <path d="M0 2h16" stroke="#999" strokeWidth="3" />
                    <path d="M2.500 6l2.500 2-2.500 2M6 10.500h4" stroke="#777" />
                </svg>
                <Caret />
            </button>
            <input
                aria-label="Command"
                placeholder="Type a command"
                className="ml-[6px] min-w-0 flex-1 bg-transparent font-['DejaVu_Sans_Mono',monospace] text-xs italic outline-none placeholder:text-[#8a8a8a]"
            />
        </form>
    );
}

export default function App() {
    return (
        <div className="flex min-h-screen bg-[#f4f4f4] font-['Open_Sans','Noto_Sans',sans-serif] text-xs text-[#3c3c3c]">
            <Gradients />
            <div className="flex min-w-0 flex-1 flex-col">
                <div className="flex h-1 bg-[#d9d9d9] pl-[736px]">
                    <div className="w-[76px] bg-[#f4f4f4]" />
                </div>
                <Ribbon />
                <FileTabs />
                <main className="flex flex-1 border-t-4 border-[#f4f4f4]">
                    <PropertiesPalette />
                    <section className="relative flex min-w-0 flex-1 flex-col">
                        <div className="relative flex-1 bg-white">
                            <TerrainDrawing />
                            <p className="absolute top-[6px] left-[3px] text-black">[−][Top][2D Wireframe]</p>
                            <ViewCube />
                            <output className="absolute bottom-[2px] left-16 rounded-sm bg-[#cdcdcd] px-px font-['DejaVu_Sans_Mono',monospace] leading-[15px] text-white">
                                Command: ._ClearPvAreas
                            </output>
                        </div>
                        <CommandLine />
                        <div className="h-[3px]" />
                        {/* UCS icon, its lower part lies under the command line */}
                        <svg className="pointer-events-none absolute bottom-[14px] left-3 h-20 w-20" viewBox="352 834 80 80" fill="none" aria-hidden="true">
                            <path d="M359.500 855v39M361.500 838l6 7 6-7M367.500 845v6M413 891l3 3M427 891l-3 3" stroke="#111" strokeWidth="1.200" />
                            <path d="M359.500 894v11M355.500 900.500h9v9h-9zM360 905.500h55M416 894l10 10M424 894l-10 10" stroke="#8c8c8c" />
                        </svg>
                    </section>
                </main>
            </div>
            <div className="w-[3px] shrink-0 bg-[#d9d9d9]" />
            <div className="w-px shrink-0 bg-[#1c8fc0]" />
            <div className="w-[2px] shrink-0 bg-[#f4f4f4]" />
        </div>
    );
}
